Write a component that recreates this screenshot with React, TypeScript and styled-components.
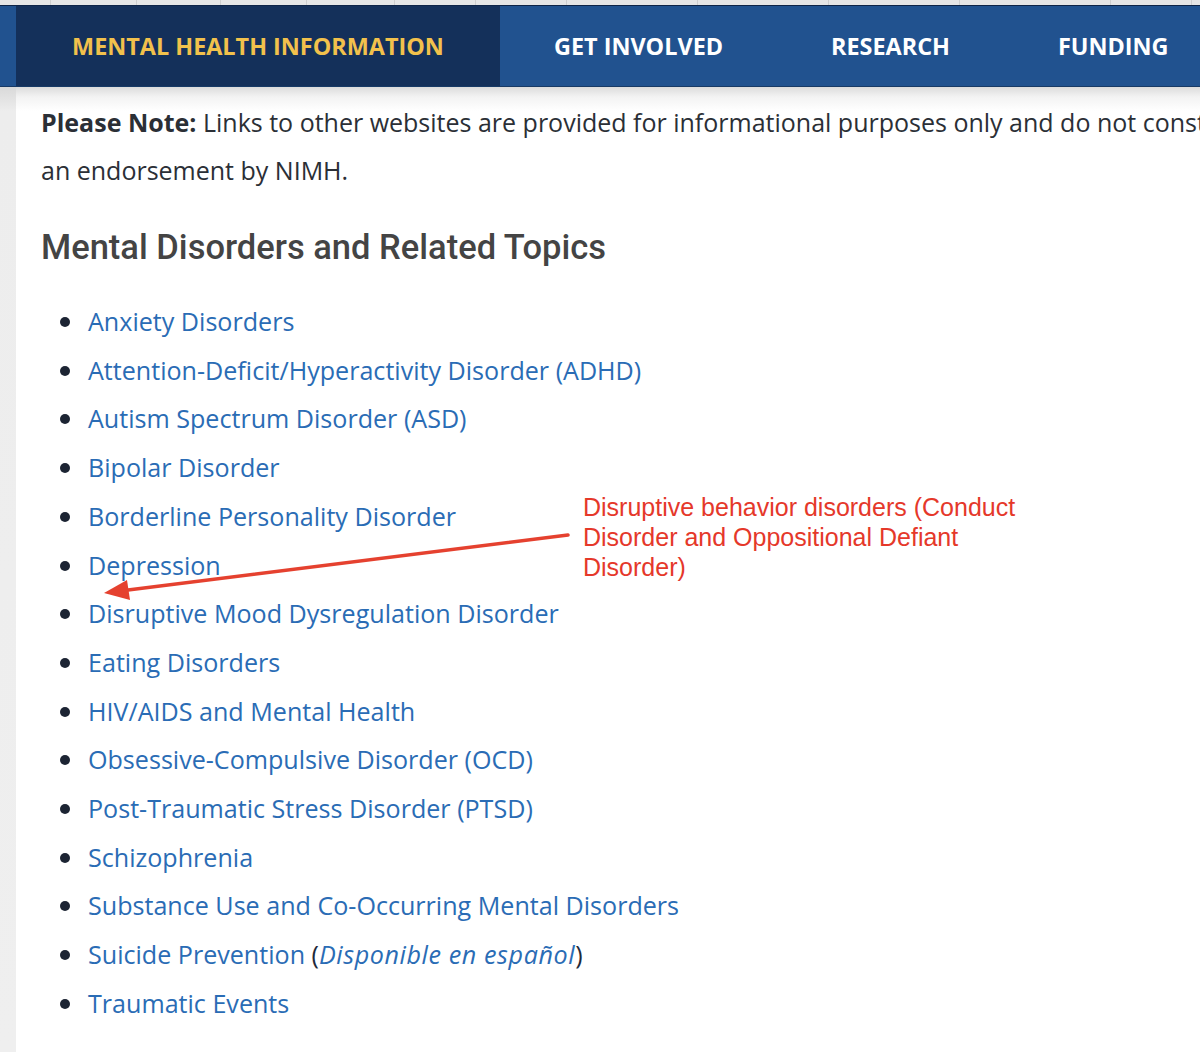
import React from "react";
import styled, { createGlobalStyle } from "styled-components";

const Global = createGlobalStyle`
  html, body { margin: 0; padding: 0; overflow: hidden; background: #ffffff; }
  body { font-family: "Open Sans", "Liberation Sans", sans-serif; }
`;

const Page = styled.div`
  position: relative;
  width: 1200px;
  height: 1052px;
  overflow: hidden;
  display: flex;
  flex-direction: column;
`;

const TopStrip = styled.div`
  height: 5px;
  background: #e6e6e6;
  display: flex;
  border-bottom: 1px solid #0e2447;
`;

const StripCell = styled.div<{ $w: number }>`
  width: ${(p) => p.$w}px;
  border-right: 1px solid #cfcfcf;
`;

const Nav = styled.nav`
  height: 80px;
  background: #21528f;
  display: flex;
  align-items: stretch;
  padding-left: 16px;
  border-bottom: 1px solid #173a66;
  white-space: nowrap;
`;

const NavItem = styled.a<{ $active?: boolean }>`
  flex-shrink: 0;
  display: flex;
  align-items: center;
  justify-content: center;
  box-sizing: border-box;
  padding: 0 54px;
  width: ${(p) => (p.$active ? "484px" : "auto")};
  background: ${(p) => (p.$active ? "#14305a" : "transparent")};
  color: ${(p) => (p.$active ? "#f2c14c" : "#ffffff")};
  font-family: "Open Sans", sans-serif;
  font-weight: 700;
  font-size: 23.4px;
  text-transform: uppercase;
  text-decoration: none;
`;

const Body = styled.div`
  flex: 1;
  display: flex;
`;

const Gutter = styled.div`
  width: 16px;
  background: linear-gradient(to bottom, #d9d9d9 0px, #ededed 24px, #efefef 100%);
`;

const Content = styled.main`
  flex: 1;
  background: linear-gradient(to bottom, #dcdcdc 0px, #f3f3f3 10px, #ffffff 24px);
  padding: 11px 0 0 25px;
  min-width: 0;
`;

const Note = styled.p`
  margin: 0;
  font-family: "Open Sans", sans-serif;
  font-size: 25px;
  line-height: 48px;
  color: #2b2f36;
  white-space: nowrap;
`;

const Strong = styled.strong`
  font-weight: 700;
`;

const Heading = styled.h2`
  margin: 29px 0 0;
  font-family: Roboto, sans-serif;
  font-weight: 500;
  font-size: 34.5px;
  line-height: 48px;
  color: #444444;
`;

const List = styled.ul`
  margin: 26px 0 0;
  padding: 0 0 0 47px;
  list-style: none;
`;

const Item = styled.li`
  position: relative;
  font-family: "Open Sans", sans-serif;
  font-size: 25.1px;
  line-height: 48.7px;
  &::before {
    content: "";
    position: absolute;
    left: -28px;
    top: 20px;
    width: 10px;
    height: 10px;
    border-radius: 50%;
    background: #1c2433;
  }
`;

const Link = styled.a<{ $italic?: boolean }>`
  color: #2a6cb5;
  text-decoration: none;
  font-style: ${(p) => (p.$italic ? "italic" : "normal")};
  letter-spacing: ${(p) => (p.$italic ? "0.6px" : "normal")};
`;

const Plain = styled.span`
  color: #1f2a3a;
`;

const Annotation = styled.div`
  position: absolute;
  left: 583px;
  top: 492px;
  width: 480px;
  font-family: "Liberation Sans", Arial, sans-serif;
  font-size: 25px;
  line-height: 30px;
  color: #e5382a;
`;

const ArrowSvg = styled.svg`
  position: absolute;
  left: 0;
  top: 0;
  pointer-events: none;
`;

const topics = [
  "Anxiety Disorders",
  "Attention-Deficit/Hyperactivity Disorder (ADHD)",
  "Autism Spectrum Disorder (ASD)",
  "Bipolar Disorder",
  "Borderline Personality Disorder",
  "Depression",
  "Disruptive Mood Dysregulation Disorder",
  "Eating Disorders",
  "HIV/AIDS and Mental Health",
  "Obsessive-Compulsive Disorder (OCD)",
  "Post-Traumatic Stress Disorder (PTSD)",
  "Schizophrenia",
  "Substance Use and Co-Occurring Mental Disorders",
];

export default function App() {
  return (
    <Page>
      <Global />
      <TopStrip>
        {[50, 85, 83, 85, 87, 80, 90, 130, 130, 130, 150, 80].map((w, i) => (
          <StripCell key={i} $w={w} />
        ))}
      </TopStrip>
      <Nav>
        <NavItem $active>Mental Health Information</NavItem>
        <NavItem>Get Involved</NavItem>
        <NavItem>Research</NavItem>
        <NavItem>Funding</NavItem>
      </Nav>
      <Body>
        <Gutter />
        <Content>
          <Note>
            <Strong>Please Note:</Strong> Links to other websites are provided for informational purposes only and do not constitute
            <br />
            an endorsement by NIMH.
          </Note>
          <Heading>Mental Disorders and Related Topics</Heading>
          <List>
            {topics.map((t) => (
              <Item key={t}>
                <Link href="#">{t}</Link>
              </Item>
            ))}
            <Item>
              <Link href="#">Suicide Prevention</Link> <Plain>(</Plain>
              <Link href="#" $italic>
                Disponible en español
              </Link>
              <Plain>)</Plain>
            </Item>
            <Item>
              <Link href="#">Traumatic Events</Link>
            </Item>
          </List>
        </Content>
      </Body>
      <Annotation>
        Disruptive behavior disorders (Conduct
        <br />
        Disorder and Oppositional Defiant
        <br />
        Disorder)
      </Annotation>
      <ArrowSvg width="1200" height="1052" viewBox="0 0 1200 1052">
        <line x1="568" y1="535" x2="120" y2="591" stroke="#e5412f" strokeWidth="3.5" strokeLinecap="round" />
        <polygon points="104,593 127,580 130,600" fill="#e5412f" />
      </ArrowSvg>
    </Page>
  );
}
